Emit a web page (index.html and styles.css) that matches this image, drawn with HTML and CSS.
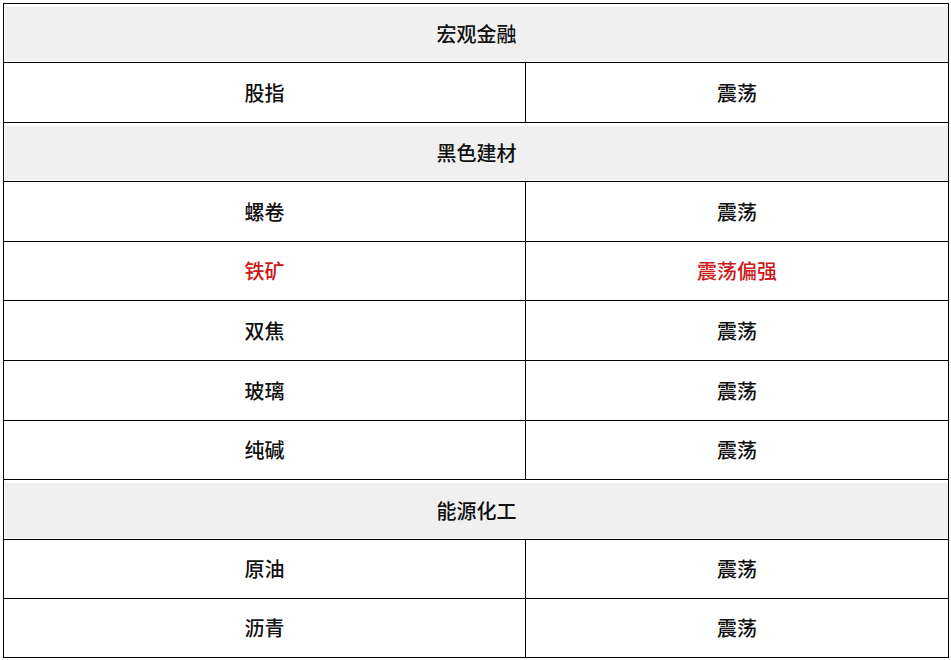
FILE: index.html
```html
<!DOCTYPE html>
<html lang="zh-CN">
<head>
<meta charset="utf-8">
<title>品种观点</title>
<link rel="stylesheet" href="styles.css">
</head>
<body>
<table class="grid">
  <colgroup><col class="c1"><col class="c2"></colgroup>
  <tbody>
    <tr class="sect"><td colspan="2"><div class="sect-fill">宏观金融</div></td></tr>
    <tr class="tall"><td>股指</td><td>震荡</td></tr>
    <tr class="sect"><td colspan="2"><div class="sect-fill">黑色建材</div></td></tr>
    <tr class="tall"><td>螺卷</td><td>震荡</td></tr>
    <tr class="hot"><td>铁矿</td><td>震荡偏强</td></tr>
    <tr class="tall"><td>双焦</td><td>震荡</td></tr>
    <tr class="tall"><td>玻璃</td><td>震荡</td></tr>
    <tr><td>纯碱</td><td>震荡</td></tr>
    <tr class="sect tall"><td colspan="2"><div class="sect-fill">能源化工</div></td></tr>
    <tr><td>原油</td><td>震荡</td></tr>
    <tr><td>沥青</td><td>震荡</td></tr>
  </tbody>
</table>
</body>
</html>
```
FILE: styles.css
```css
html, body {
  margin: 0;
  padding: 0;
  background: #ffffff;
}
body {
  padding: 3px 0 0 3px;
  font-family: "Noto Sans CJK SC", "Noto Sans", sans-serif;
}
.grid {
  border-collapse: collapse;
  width: 945px;
  table-layout: fixed;
}
.c1 { width: 522px; }
.c2 { width: 423px; }
.grid td {
  border: 1px solid #000;
  height: 58px;
  padding: 0;
  text-align: center;
  vertical-align: middle;
  font-size: 20px;
  font-weight: 500;
  color: #111;
  line-height: 1;
}
.grid .tall td {
  height: 59px;
}
.grid .sect td {
  height: auto;
  padding: 3px 0 1px 1px;
}
.sect-fill {
  background: #f0f0f0;
  height: 54px;
  display: flex;
  align-items: center;
  justify-content: center;
}
.sect.tall .sect-fill {
  height: 55px;
}
.grid .hot td {
  color: #cc1a1a;
}
```
